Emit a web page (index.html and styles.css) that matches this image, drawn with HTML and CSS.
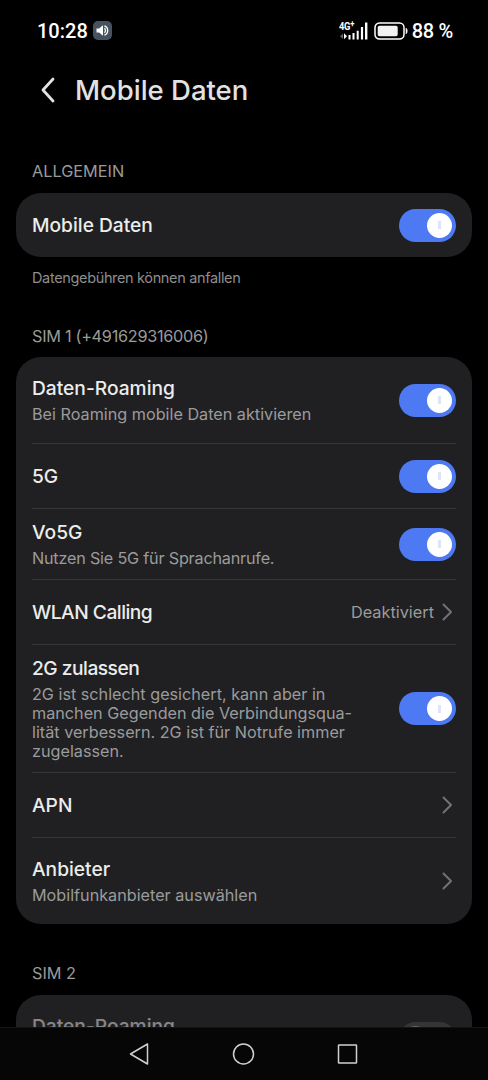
FILE: index.html
```html
<!DOCTYPE html>
<html lang="de">
<head>
    <meta charset="UTF-8">
    <meta name="viewport" content="width=device-width, initial-scale=1.0">
    <title>Mobile Daten</title>
    <link rel="stylesheet" href="styles.css">
</head>
<body>
    <div class="status-bar">
        <span class="time">10:28</span>
        <span class="sound-badge">
            <svg width="19" height="19" viewBox="0 0 19 19">
                <path d="M3.5 7.4h2.6L10 4.2v10.6l-3.9-3.2H3.5z" fill="#fff"/>
                <path d="M11.4 7.2a3 3 0 0 1 0 4.6M11.400 4.800a5 5 0 0 1 0 9.400" fill="none" stroke="#fff" stroke-width="1.3"/>
            </svg>
        </span>
        <span class="network">
            <span class="network-type">4G<sup>+</sup></span>
            <svg width="29" height="18" viewBox="0 0 29 18">
                <path d="M1 14.300l3-2.600v5.200z" fill="#666"/>
                <path d="M5 11.300l3 3-3 3z" fill="#fff"/>
                <path d="M9.500 13h2v4.500h-2zM13.500 11h2v6.500h-2zM17.700 8.700h2v8.800h-2zM21.900 5h2.200v12.500h-2.200zM26 .5h2.400v17H26z" fill="#fff"/>
            </svg>
        </span>
        <svg class="battery" width="34" height="18" viewBox="0 0 34 18">
            <rect x="1" y="1" width="29" height="16" rx="4.5" fill="none" stroke="#fff" stroke-width="1.5"/>
            <rect x="3.7" y="3.7" width="20" height="10.6" rx="1.8" fill="#f2f2f2"/>
            <path d="M32 6.2c1.6.4 1.6 5.2 0 5.6z" fill="#fff" stroke="#fff" stroke-width=".6"/>
        </svg>
        <span class="percent">88 %</span>
    </div>

    <header class="header">
        <svg class="back" width="16" height="26" viewBox="0 0 16 26">
            <path d="M13 2L3 13l10 11" fill="none" stroke="#e2e2e2" stroke-width="2.8" stroke-linecap="round" stroke-linejoin="round"/>
        </svg>
        <h1>Mobile Daten</h1>
    </header>

    <main class="content">
        <h2 class="section-title">ALLGEMEIN</h2>
        <div class="card">
            <div class="row">
                <div class="label">Mobile Daten</div>
                <span class="switch on"></span>
            </div>
        </div>
        <p class="note">Datengebühren können anfallen</p>

        <h2 class="section-title sim">SIM 1 (+491629316006)</h2>
        <div class="card">
            <div class="row tall">
                <div class="text">
                    <div class="label">Daten-Roaming</div>
                    <div class="desc">Bei Roaming mobile Daten aktivieren</div>
                </div>
                <span class="switch on"></span>
            </div>
            <div class="row">
                <div class="label">5G</div>
                <span class="switch on"></span>
            </div>
            <div class="row compact">
                <div class="text">
                    <div class="label">Vo5G</div>
                    <div class="desc narrow">Nutzen Sie 5G für Sprachanrufe.</div>
                </div>
                <span class="switch on"></span>
            </div>
            <div class="row">
                <div class="label narrow">WLAN Calling</div>
                <span class="value">Deaktiviert</span>
                <svg class="arrow" width="11" height="18" viewBox="0 0 11 18"><path d="M1.5 1.5L9 9l-7.500 7.500"/></svg>
            </div>
            <div class="row multi">
                <div class="text">
                    <div class="label narrow">2G zulassen</div>
                    <div class="desc">2G ist schlecht gesichert, kann aber in<br>manchen Gegenden die Verbindungsqua-<br>lität verbessern. 2G ist für Notrufe immer<br>zugelassen.</div>
                </div>
                <span class="switch on"></span>
            </div>
            <div class="row">
                <div class="label">APN</div>
                <svg class="arrow" width="11" height="18" viewBox="0 0 11 18"><path d="M1.5 1.5L9 9l-7.500 7.500"/></svg>
            </div>
            <div class="row tall">
                <div class="text">
                    <div class="label">Anbieter</div>
                    <div class="desc">Mobilfunkanbieter auswählen</div>
                </div>
                <svg class="arrow" width="11" height="18" viewBox="0 0 11 18"><path d="M1.5 1.5L9 9l-7.500 7.500"/></svg>
            </div>
        </div>

        <h2 class="section-title sim2">SIM 2</h2>
        <div class="card">
            <div class="row tall disabled">
                <div class="text">
                    <div class="label">Daten-Roaming</div>
                </div>
                <span class="switch"></span>
            </div>
        </div>
    </main>

    <nav class="nav-bar">
        <svg width="24" height="24" viewBox="0 0 24 24"><path d="M19.500 2v20L2.500 12z"/></svg>
        <svg width="24" height="24" viewBox="0 0 24 24"><circle cx="11.500" cy="12" r="10"/></svg>
        <svg width="24" height="24" viewBox="0 0 24 24"><rect x="2.500" y="3" width="18" height="18" rx=".5"/></svg>
    </nav>
</body>
</html>
```
FILE: styles.css
```css
* {
    box-sizing: border-box;
}

body {
    margin: 0;
    height: 1080px;
    display: flex;
    flex-direction: column;
    overflow: hidden;
    background-color: #000;
    color: #e8e8e8;
    font-family: Inter, "Noto Sans", sans-serif;
    white-space: nowrap;
}

/* status bar */
.status-bar {
    flex: none;
    height: 61px;
    display: flex;
    align-items: center;
    padding: 0 35px 0 37px;
    color: #fff;
    font-family: Roboto, sans-serif;
    font-size: 20px;
    font-weight: 500;
}

.sound-badge {
    width: 19px;
    height: 19px;
    margin-left: 5px;
    border-radius: 5px;
    background-color: #46525e;
}

.network {
    position: relative;
    height: 18px;
    margin-left: auto;
}

.network svg {
    display: block;
}

.network-type {
    position: absolute;
    left: 0;
    top: -1px;
    font-size: 11px;
    font-weight: 700;
    line-height: 11px;
    letter-spacing: -0.3px;
    transform: scaleX(0.85);
    transform-origin: left;
}

.network-type sup {
    font-size: 9px;
    line-height: 0;
    vertical-align: 3px;
}

.battery {
    margin-left: 6px;
}

.percent {
    margin-left: 4px;
    letter-spacing: -0.3px;
}

/* header */
.header {
    flex: none;
    height: 58px;
    display: flex;
    align-items: center;
    padding-left: 40px;
}

h1 {
    margin: 0 0 0 19px;
    color: #e2e2e2;
    font-size: 27.5px;
    font-weight: 500;
    line-height: 34px;
}

/* list */
.content {
    flex: 1;
    min-height: 0;
    padding: 40px 16px 0;
    overflow: hidden;
}

.section-title {
    margin: 0 16px 10px;
    color: #9a9a9a;
    font-size: 16.3px;
    font-weight: 400;
    line-height: 24px;
}

.section-title.sim {
    margin-bottom: 9px;
    letter-spacing: -0.3px;
}

.section-title.sim2 {
    margin-top: 37px;
}

.note {
    margin: 8px 16px 34px;
    color: #8e8e8e;
    font-size: 14.5px;
    line-height: 24px;
    letter-spacing: -0.35px;
}

.card {
    padding: 0 16px;
    border-radius: 25px;
    background-color: #202022;
}

.row {
    height: 65px;
    display: flex;
    align-items: center;
    border-bottom: 1px solid #353537;
}

.row:last-child {
    border-bottom: none;
}

.row:only-child {
    height: 64px;
}

.row.tall {
    height: 87px;
}

.row.tall:last-child {
    height: 86px;
}

.row.compact {
    height: 71px;
}

.row.multi {
    height: 128px;
}

.text {
    padding-bottom: 3px;
}

.label {
    color: #ececec;
    font-size: 19.2px;
    font-weight: 450;
    line-height: 28px;
}

.label.narrow {
    letter-spacing: -0.5px;
}

.desc {
    margin-top: 3px;
    color: #9b9b9c;
    font-size: 16.2px;
    line-height: 19px;
}

.desc.narrow {
    letter-spacing: -0.2px;
}

.value {
    margin-left: auto;
    color: #9b9b9c;
    font-size: 16.3px;
}

.arrow {
    flex: none;
    margin: 0 3px 0 auto;
    fill: none;
    stroke: #727274;
    stroke-width: 2;
    stroke-linecap: round;
    stroke-linejoin: round;
}

.value + .arrow {
    margin-left: 8px;
}

/* switch */
.switch {
    flex: none;
    width: 57px;
    height: 33px;
    display: flex;
    align-items: center;
    margin-left: auto;
    padding: 0 4px;
    border-radius: 17px;
    background-color: #4a4a4c;
}

.switch::before {
    content: "";
    width: 25px;
    height: 25px;
    border-radius: 50%;
    background-color: #a5a5a5;
}

.switch.on {
    justify-content: flex-end;
    background-color: #4d7af2;
}

.switch.on::before {
    background: linear-gradient(#dfe4fb, #dfe4fb) center / 3px 8px no-repeat #fff;
}

.card + .note {
    margin-top: 9px;
}

.disabled {
    align-items: flex-start;
}

.disabled .text {
    padding-top: 17px;
}

.disabled .switch {
    margin-top: 27px;
}

.disabled .label,
.disabled .switch {
    opacity: 0.5;
}

/* navigation bar */
.nav-bar {
    flex: none;
    height: 53px;
    display: flex;
    justify-content: center;
    align-items: center;
    gap: 80px;
    border-top: 1px solid #141414;
    background-color: #060606;
}

.nav-bar svg {
    fill: none;
    stroke: #d0d0d0;
    stroke-width: 1.5;
    stroke-linejoin: round;
}
```
